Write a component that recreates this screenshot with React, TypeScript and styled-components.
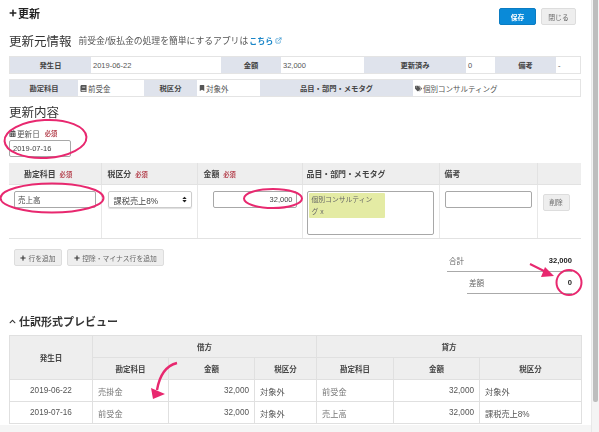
import React from 'react';
import styled, { createGlobalStyle } from 'styled-components';
import { FaBook, FaBookmark, FaCalendarAlt, FaPlus, FaSort, FaTags, FaChevronUp } from 'react-icons/fa';
import { FiExternalLink } from 'react-icons/fi';

const GlobalStyle = createGlobalStyle`
  html, body {
    margin: 0;
    height: 432px;
    overflow: hidden;
    background: #fff;
    font-family: "Liberation Sans", "Noto Sans CJK JP", sans-serif;
    color: #444;
  }
`;

const Page = styled.div`
  position: relative;
  display: flex;
  width: 599px;
  height: 432px;
  filter: blur(0.3px);
`;

const Column = styled.div`
  width: 591px;
  display: flex;
  flex-direction: column;
`;

const Content = styled.div`
  padding: 8px 10px 0 9px;
  height: 417px;
`;

const FooterStrip = styled.div`
  flex: 1;
  background: #f5f5f5;
`;

const Scrollbar = styled.div`
  width: 8px;
  background: #f4f4f4;
  border-left: 1px solid #e8e8e8;
  padding-left: 1px;
  box-sizing: border-box;
`;

const ScrollThumb = styled.div`
  width: 5px;
  height: 402px;
  background: #bdbdbd;
  border-radius: 0 0 2px 2px;
`;

const TopBar = styled.div`
  display: flex;
  align-items: flex-start;
  gap: 5px;
  height: 17px;
  padding-right: 5px;
`;

const PageTitle = styled.h1`
  margin: -1px auto 0 0;
  display: flex;
  align-items: center;
  gap: 1px;
  height: 12px;
  font-size: 11px;
  font-weight: 700;
  color: #222;
`;

const Button = styled.button<{ $primary?: boolean; $w: number }>`
  display: inline-flex;
  align-items: center;
  justify-content: center;
  gap: 2px;
  box-sizing: border-box;
  width: ${(p) => p.$w}px;
  height: 17px;
  padding: 0;
  border-radius: 2px;
  font-family: inherit;
  font-size: 6.8px;
  font-weight: ${(p) => (p.$primary ? 700 : 400)};
  color: ${(p) => (p.$primary ? '#fff' : '#666')};
  background: ${(p) => (p.$primary ? '#0a8ad8' : '#eee')};
  border: 1px solid ${(p) => (p.$primary ? '#0b7cc2' : '#ddd')};
  svg {
    color: #333;
  }
`;

const SectionRow = styled.div<{ $mt: number; $mb: number }>`
  display: flex;
  align-items: center;
  gap: 7px;
  height: 20px;
  margin-top: ${(p) => p.$mt}px;
  margin-bottom: ${(p) => p.$mb}px;
`;

const SectionTitle = styled.h2`
  margin: 0;
  font-size: 12.5px;
  font-weight: 400;
  color: #333;
`;

const SectionNote = styled.span`
  font-size: 8.8px;
  color: #555;
`;

const NoteLink = styled.a`
  display: inline-flex;
  align-items: center;
  gap: 2px;
  color: #1a86c8;
  font-weight: 700;
  font-size: 8px;
  margin-left: 1px;
`;

const InfoRow = styled.div<{ $cols: string; $mt?: number }>`
  display: grid;
  grid-template-columns: ${(p) => p.$cols};
  height: 18px;
  margin-top: ${(p) => p.$mt ?? 0}px;
  box-sizing: border-box;
  border: 1px solid #e4e4e4;
`;

const InfoLabel = styled.div`
  display: flex;
  align-items: center;
  justify-content: center;
  background: #dfe3ec;
  font-size: 7.3px;
  font-weight: 700;
  color: #444;
`;

const InfoValue = styled.div`
  display: flex;
  align-items: center;
  gap: 1px;
  padding-left: 2px;
  font-size: 7.5px;
  color: #555;
  background: #fff;
  overflow: hidden;
  white-space: nowrap;
`;

const FieldLabel = styled.div`
  display: flex;
  align-items: center;
  gap: 1px;
  height: 12px;
  margin-top: -1px;
  font-size: 7.6px;
  color: #555;
`;

const Required = styled.span`
  margin-left: 4px;
  font-size: 6.3px;
  font-weight: 700;
  color: #b5434f;
`;

const TextInput = styled.input<{ $w?: number; $right?: boolean }>`
  display: block;
  box-sizing: border-box;
  width: ${(p) => (p.$w ? `${p.$w}px` : '100%')};
  height: 17px;
  padding: 0 3px;
  font-family: inherit;
  font-size: 7.5px;
  color: #444;
  text-align: ${(p) => (p.$right ? 'right' : 'left')};
  background: #fff;
  border: 1px solid #a8a8a8;
  border-radius: 2px;
  outline: none;
`;

const DateInput = styled(TextInput)`
  margin-top: 1px;
`;

const SelectBox = styled.div`
  display: flex;
  align-items: center;
  justify-content: space-between;
  box-sizing: border-box;
  height: 17px;
  padding: 0 3px 0 5px;
  font-size: 8.2px;
  color: #444;
  border: 1px solid #ccc;
  border-radius: 2px;
  box-shadow: 0 1px 1px #ddd;
  svg {
    color: #222;
  }
`;

const TagBox = styled.div`
  box-sizing: border-box;
  height: 44px;
  padding: 1px;
  border: 1px solid #a8a8a8;
  border-radius: 2px;
`;

const TagChip = styled.div`
  box-sizing: border-box;
  width: 76px;
  height: 25px;
  padding: 1px 9px 1px 3px;
  font-size: 6.8px;
  line-height: 12px;
  color: #666;
  background: #e4eba4;
  border-radius: 1px;
`;

const EditTable = styled.table`
  width: 572px;
  margin-top: 6px;
  table-layout: fixed;
  border-collapse: collapse;
`;

const Col = styled.col<{ $w: number }>`
  width: ${(p) => p.$w}px;
`;

const EditHead = styled.th<{ $pl?: number }>`
  height: 21px;
  padding: 0 0 0 ${(p) => p.$pl ?? 6}px;
  text-align: left;
  font-size: 7.9px;
  font-weight: 700;
  color: #444;
  background: #eee;
  border-left: 1px solid #e2e2e2;
  border-bottom: 1px solid #e2e2e2;
  &:first-child {
    border-left: 0;
  }
`;

const EditCell = styled.td<{ $pl?: number }>`
  height: 54px;
  box-sizing: border-box;
  padding: 6px 5px 0 ${(p) => p.$pl ?? 5}px;
  vertical-align: top;
  border-left: 1px solid #e8e8e8;
  border-bottom: 1px solid #e2e2e2;
  &:first-child {
    border-left: 0;
  }
`;

const FooterRow = styled.div`
  display: flex;
  justify-content: space-between;
  margin-top: 10px;
`;

const ActionGroup = styled.div`
  display: flex;
  gap: 5px;
  padding-left: 5px;
`;

const Totals = styled.div`
  width: 125px;
  margin: 1px 9px 0 0;
`;

const TotalRow = styled.div<{ $indent?: number }>`
  display: flex;
  justify-content: space-between;
  align-items: center;
  box-sizing: border-box;
  height: 22px;
  margin-left: ${(p) => p.$indent ?? 0}px;
  padding: 0 0 0 2px;
  font-size: 7.6px;
  color: #666;
  border-bottom: 1px solid #aaa;
`;

const TotalValue = styled.strong`
  font-size: 7.6px;
  color: #222;
`;

const PreviewTitle = styled.h3`
  display: flex;
  align-items: center;
  gap: 3px;
  height: 20px;
  margin: 17px 0 4px;
  font-size: 11px;
  font-weight: 700;
  color: #333;
`;

const PreviewTable = styled.table`
  width: 572px;
  table-layout: fixed;
  border-collapse: collapse;
`;

const PreviewHead = styled.th`
  height: 22px;
  box-sizing: border-box;
  padding: 0;
  font-size: 7.5px;
  font-weight: 700;
  color: #444;
  background: #eee;
  border: 1px solid #e0e0e0;
`;

const PreviewCell = styled.td<{ $right?: boolean; $muted?: boolean; $center?: boolean }>`
  height: 22px;
  box-sizing: border-box;
  padding: 0 5px;
  font-size: 8.2px;
  color: ${(p) => (p.$muted ? '#777' : '#555')};
  text-align: ${(p) => (p.$right ? 'right' : p.$center ? 'center' : 'left')};
  border: 1px solid #e0e0e0;
`;

const Annotations = styled.svg`
  position: absolute;
  left: 0;
  top: 0;
  width: 599px;
  height: 432px;
  pointer-events: none;
`;

const Ring = styled.ellipse`
  fill: none;
  stroke: #e8286f;
  stroke-width: 2;
`;

const infoRowOne = '81px 130px 60px 83px 102px 29px 61px 1fr';
const infoRowTwo = '68px 66px 53px 63px 153px 1fr';
const editCols = [92, 96, 105, 137, 98, 44];
const previewCols = [83, 76, 86, 62, 77, 86, 102];

const previewRows = [
  ['2019-06-22', '売掛金', '32,000', '対象外', '前受金', '32,000', '対象外'],
  ['2019-07-16', '前受金', '32,000', '対象外', '売上高', '32,000', '課税売上8%'],
];

export default function App() {
  return (
    <Page>
      <GlobalStyle />
      <Column>
        <Content>
          <TopBar>
            <PageTitle>
              <FaPlus size={8} />
              更新
            </PageTitle>
            <Button $primary $w={37}>保存</Button>
            <Button $w={35}>閉じる</Button>
          </TopBar>

          <SectionRow $mt={5} $mb={6}>
            <SectionTitle>更新元情報</SectionTitle>
            <SectionNote>
              前受金/仮払金の処理を簡単にするアプリは
              <NoteLink>
                こちら
                <FiExternalLink size={7} />
              </NoteLink>
            </SectionNote>
          </SectionRow>
          <InfoRow $cols={infoRowOne}>
            <InfoLabel>発生日</InfoLabel>
            <InfoValue>2019-06-22</InfoValue>
            <InfoLabel>金額</InfoLabel>
            <InfoValue>32,000</InfoValue>
            <InfoLabel>更新済み</InfoLabel>
            <InfoValue>0</InfoValue>
            <InfoLabel>備考</InfoLabel>
            <InfoValue>-</InfoValue>
          </InfoRow>
          <InfoRow $cols={infoRowTwo} $mt={5}>
            <InfoLabel>勘定科目</InfoLabel>
            <InfoValue>
              <FaBook size={7} />
              前受金
            </InfoValue>
            <InfoLabel>税区分</InfoLabel>
            <InfoValue>
              <FaBookmark size={6} />
              対象外
            </InfoValue>
            <InfoLabel>品目・部門・メモタグ</InfoLabel>
            <InfoValue>
              <FaTags size={7} />
              個別コンサルティング
            </InfoValue>
          </InfoRow>

          <SectionRow $mt={4} $mb={7}>
            <SectionTitle>更新内容</SectionTitle>
          </SectionRow>
          <FieldLabel>
            <FaCalendarAlt size={7} />
            更新日
            <Required>必須</Required>
          </FieldLabel>
          <DateInput $w={62} readOnly value="2019-07-16" />

          <EditTable>
            <colgroup>
              {editCols.map((w, i) => (
                <Col key={i} $w={w} />
              ))}
            </colgroup>
            <thead>
              <tr>
                <EditHead $pl={15}>勘定科目<Required>必須</Required></EditHead>
                <EditHead>税区分<Required>必須</Required></EditHead>
                <EditHead>金額<Required>必須</Required></EditHead>
                <EditHead $pl={4}>品目・部門・メモタグ</EditHead>
                <EditHead $pl={5}>備考</EditHead>
                <EditHead />
              </tr>
            </thead>
            <tbody>
              <tr>
                <EditCell>
                  <TextInput readOnly value="売上高" />
                </EditCell>
                <EditCell $pl={6}>
                  <SelectBox>
                    課税売上8%
                    <FaSort size={7} />
                  </SelectBox>
                </EditCell>
                <EditCell $pl={15}>
                  <TextInput $right readOnly value="32,000" />
                </EditCell>
                <EditCell $pl={4}>
                  <TagBox>
                    <TagChip>個別コンサルティング x</TagChip>
                  </TagBox>
                </EditCell>
                <EditCell>
                  <TextInput readOnly value="" />
                </EditCell>
                <EditCell>
                  <Button $w={27}>削除</Button>
                </EditCell>
              </tr>
            </tbody>
          </EditTable>

          <FooterRow>
            <ActionGroup>
              <Button $w={48}>
                <FaPlus size={6} />
                行を追加
              </Button>
              <Button $w={97}>
                <FaPlus size={6} />
                控除・マイナス行を追加
              </Button>
            </ActionGroup>
            <Totals>
              <TotalRow>
                合計
                <TotalValue>32,000</TotalValue>
              </TotalRow>
              <TotalRow $indent={20}>
                差額
                <TotalValue>0</TotalValue>
              </TotalRow>
            </Totals>
          </FooterRow>

          <PreviewTitle>
            <FaChevronUp size={7} />
            仕訳形式プレビュー
          </PreviewTitle>
          <PreviewTable>
            <colgroup>
              {previewCols.map((w, i) => (
                <Col key={i} $w={w} />
              ))}
            </colgroup>
            <thead>
              <tr>
                <PreviewHead rowSpan={2}>発生日</PreviewHead>
                <PreviewHead colSpan={3}>借方</PreviewHead>
                <PreviewHead colSpan={3}>貸方</PreviewHead>
              </tr>
              <tr>
                <PreviewHead>勘定科目</PreviewHead>
                <PreviewHead>金額</PreviewHead>
                <PreviewHead>税区分</PreviewHead>
                <PreviewHead>勘定科目</PreviewHead>
                <PreviewHead>金額</PreviewHead>
                <PreviewHead>税区分</PreviewHead>
              </tr>
            </thead>
            <tbody>
              {previewRows.map((row) => (
                <tr key={row[0]}>
                  <PreviewCell $center>{row[0]}</PreviewCell>
                  <PreviewCell $muted>{row[1]}</PreviewCell>
                  <PreviewCell $right>{row[2]}</PreviewCell>
                  <PreviewCell>{row[3]}</PreviewCell>
                  <PreviewCell $muted>{row[4]}</PreviewCell>
                  <PreviewCell $right>{row[5]}</PreviewCell>
                  <PreviewCell>{row[6]}</PreviewCell>
                </tr>
              ))}
            </tbody>
          </PreviewTable>
        </Content>
        <FooterStrip />
      </Column>
      <Scrollbar>
        <ScrollThumb />
      </Scrollbar>

      <Annotations viewBox="0 0 599 432">
        <Ring cx="45.5" cy="139" rx="41" ry="19" transform="rotate(-3 45.5 139)" />
        <Ring cx="52" cy="198" rx="51.5" ry="14.5" />
        <Ring cx="273" cy="198.5" rx="29" ry="9.5" />
        <circle cx="569" cy="282.5" r="12.5" fill="none" stroke="#e8286f" strokeWidth="2" />
        <path d="M530 264 L546 272" stroke="#e8286f" strokeWidth="2" fill="none" />
        <polygon points="545,267 541,277 554,276" fill="#e8286f" />
        <path d="M177 363 Q161 367 157 390" stroke="#e8286f" strokeWidth="2.4" fill="none" />
        <polygon points="151,388 153,399 165,394" fill="#e8286f" />
      </Annotations>
    </Page>
  );
}
